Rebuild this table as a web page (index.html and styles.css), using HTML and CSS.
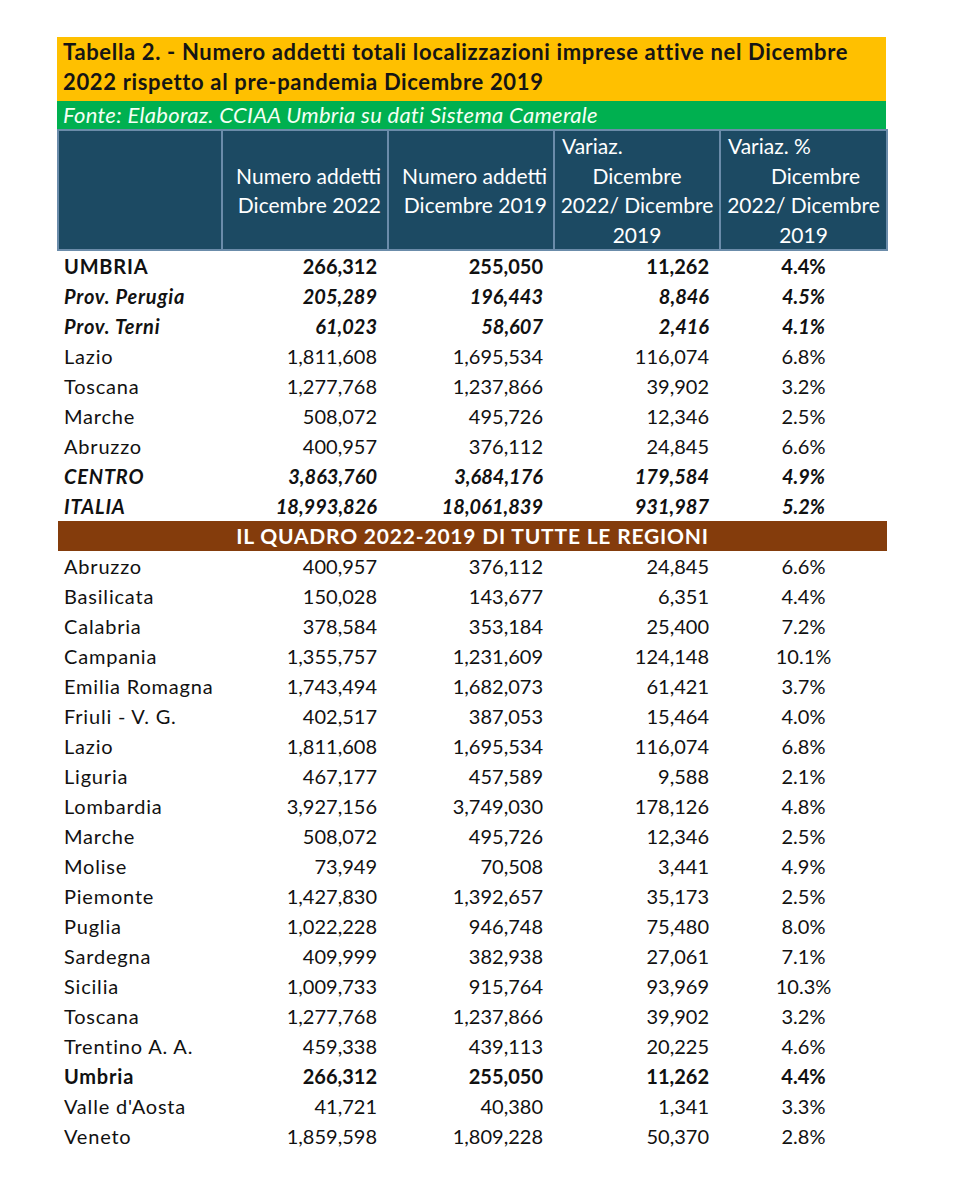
FILE: index.html
```html
<!DOCTYPE html>
<html lang="it">
<head>
<meta charset="utf-8">
<title>Tabella 2</title>
<link rel="stylesheet" href="styles.css">
</head>
<body>
<div class="sheet">
  <div class="title">Tabella 2. - Numero addetti totali localizzazioni imprese attive nel Dicembre<br>2022 rispetto al pre-pandemia Dicembre 2019</div>
  <div class="source">Fonte: Elaboraz. CCIAA Umbria su dati Sistema Camerale</div>
  <table class="data">
    <colgroup>
      <col class="c1"><col class="c2"><col class="c3"><col class="c4"><col class="c5">
    </colgroup>
    <thead>
      <tr>
        <th></th>
        <th class="hr">Numero addetti<br>Dicembre 2022</th>
        <th class="hr">Numero addetti<br>Dicembre 2019</th>
        <th class="hv"><span class="l">Variaz.</span><span class="c">Dicembre</span><span class="c">2022/ Dicembre</span><span class="c">2019</span></th>
        <th class="hv"><span class="l">Variaz. %</span><span class="c shift">Dicembre</span><span class="c">2022/ Dicembre</span><span class="c">2019</span></th>
      </tr>
    </thead>
    <tbody>
      <tr class="b"><td>UMBRIA</td><td>266,312</td><td>255,050</td><td>11,262</td><td>4.4%</td></tr>
      <tr class="bi"><td>Prov. Perugia</td><td>205,289</td><td>196,443</td><td>8,846</td><td>4.5%</td></tr>
      <tr class="bi"><td>Prov. Terni</td><td>61,023</td><td>58,607</td><td>2,416</td><td>4.1%</td></tr>
      <tr><td>Lazio</td><td>1,811,608</td><td>1,695,534</td><td>116,074</td><td>6.8%</td></tr>
      <tr><td>Toscana</td><td>1,277,768</td><td>1,237,866</td><td>39,902</td><td>3.2%</td></tr>
      <tr><td>Marche</td><td>508,072</td><td>495,726</td><td>12,346</td><td>2.5%</td></tr>
      <tr><td>Abruzzo</td><td>400,957</td><td>376,112</td><td>24,845</td><td>6.6%</td></tr>
      <tr class="bi"><td>CENTRO</td><td>3,863,760</td><td>3,684,176</td><td>179,584</td><td>4.9%</td></tr>
      <tr class="bi"><td>ITALIA</td><td>18,993,826</td><td>18,061,839</td><td>931,987</td><td>5.2%</td></tr>
      <tr class="band"><td colspan="5">IL QUADRO 2022-2019 DI TUTTE LE REGIONI</td></tr>
      <tr><td>Abruzzo</td><td>400,957</td><td>376,112</td><td>24,845</td><td>6.6%</td></tr>
      <tr><td>Basilicata</td><td>150,028</td><td>143,677</td><td>6,351</td><td>4.4%</td></tr>
      <tr><td>Calabria</td><td>378,584</td><td>353,184</td><td>25,400</td><td>7.2%</td></tr>
      <tr><td>Campania</td><td>1,355,757</td><td>1,231,609</td><td>124,148</td><td>10.1%</td></tr>
      <tr><td>Emilia Romagna</td><td>1,743,494</td><td>1,682,073</td><td>61,421</td><td>3.7%</td></tr>
      <tr><td>Friuli - V. G.</td><td>402,517</td><td>387,053</td><td>15,464</td><td>4.0%</td></tr>
      <tr><td>Lazio</td><td>1,811,608</td><td>1,695,534</td><td>116,074</td><td>6.8%</td></tr>
      <tr><td>Liguria</td><td>467,177</td><td>457,589</td><td>9,588</td><td>2.1%</td></tr>
      <tr><td>Lombardia</td><td>3,927,156</td><td>3,749,030</td><td>178,126</td><td>4.8%</td></tr>
      <tr><td>Marche</td><td>508,072</td><td>495,726</td><td>12,346</td><td>2.5%</td></tr>
      <tr><td>Molise</td><td>73,949</td><td>70,508</td><td>3,441</td><td>4.9%</td></tr>
      <tr><td>Piemonte</td><td>1,427,830</td><td>1,392,657</td><td>35,173</td><td>2.5%</td></tr>
      <tr><td>Puglia</td><td>1,022,228</td><td>946,748</td><td>75,480</td><td>8.0%</td></tr>
      <tr><td>Sardegna</td><td>409,999</td><td>382,938</td><td>27,061</td><td>7.1%</td></tr>
      <tr><td>Sicilia</td><td>1,009,733</td><td>915,764</td><td>93,969</td><td>10.3%</td></tr>
      <tr><td>Toscana</td><td>1,277,768</td><td>1,237,866</td><td>39,902</td><td>3.2%</td></tr>
      <tr><td>Trentino A. A.</td><td>459,338</td><td>439,113</td><td>20,225</td><td>4.6%</td></tr>
      <tr class="b"><td>Umbria</td><td>266,312</td><td>255,050</td><td>11,262</td><td>4.4%</td></tr>
      <tr><td>Valle d'Aosta</td><td>41,721</td><td>40,380</td><td>1,341</td><td>3.3%</td></tr>
      <tr><td>Veneto</td><td>1,859,598</td><td>1,809,228</td><td>50,370</td><td>2.8%</td></tr>
    </tbody>
  </table>
</div>
</body>
</html>
```

FILE: styles.css
```css
* { box-sizing: border-box; }
html, body { margin: 0; padding: 0; background: #fff; }
body {
  font-family: Lato, "Open Sans", "Liberation Sans", sans-serif;
  font-size: 20px;
  color: #111;
}
.sheet {
  width: 829px;
  margin: 37px 0 0 57px;
}
.title {
  background: #ffc000;
  font-weight: 700;
  font-size: 22px;
  letter-spacing: 0.65px;
  line-height: 30px;
  padding: 0 6px 4px;
  color: #151515;
  white-space: nowrap;
}
.source {
  background: #00b050;
  color: #f4fff4;
  font-style: italic;
  font-size: 22px;
  letter-spacing: 0.3px;
  line-height: 28px;
  height: 28px;
  padding: 0 6px;
}
.data {
  width: 829px;
  border-collapse: collapse;
  table-layout: fixed;
}
.c1 { width: 164px; }
.c2 { width: 166px; }
.c3 { width: 166px; }
.c4 { width: 166px; }
.c5 { width: 167px; }
thead th {
  background: #1c4a63;
  color: #fff;
  font-weight: 400;
  font-size: 21px;
  line-height: 29.5px;
  height: 116px;
  border: 2px solid #6b8caa;
  vertical-align: middle;
  padding: 0;
}
thead th.hr { text-align: right; padding-right: 6px; white-space: nowrap; }
thead th.hv { text-align: center; padding: 0 2px; white-space: nowrap; }
thead th .l { display: block; text-align: left; padding-left: 5px; }
thead th .c { display: block; text-align: center; }
thead th .shift { padding-left: 24px; }
tbody td {
  height: 30px;
  line-height: 30px;
  padding: 0 11px 0 6px;
  text-align: right;
  white-space: nowrap;
}
tbody td:first-child { text-align: left; letter-spacing: 0.8px; }
tbody td:last-child { text-align: center; padding: 0; }
tr.b td { font-weight: 700; }
tr.bi td { font-weight: 700; font-style: italic; }
tr.band td {
  background: #843c0c;
  color: #fff;
  font-weight: 700;
  font-size: 21px;
  text-align: center;
  padding: 0;
}
```
